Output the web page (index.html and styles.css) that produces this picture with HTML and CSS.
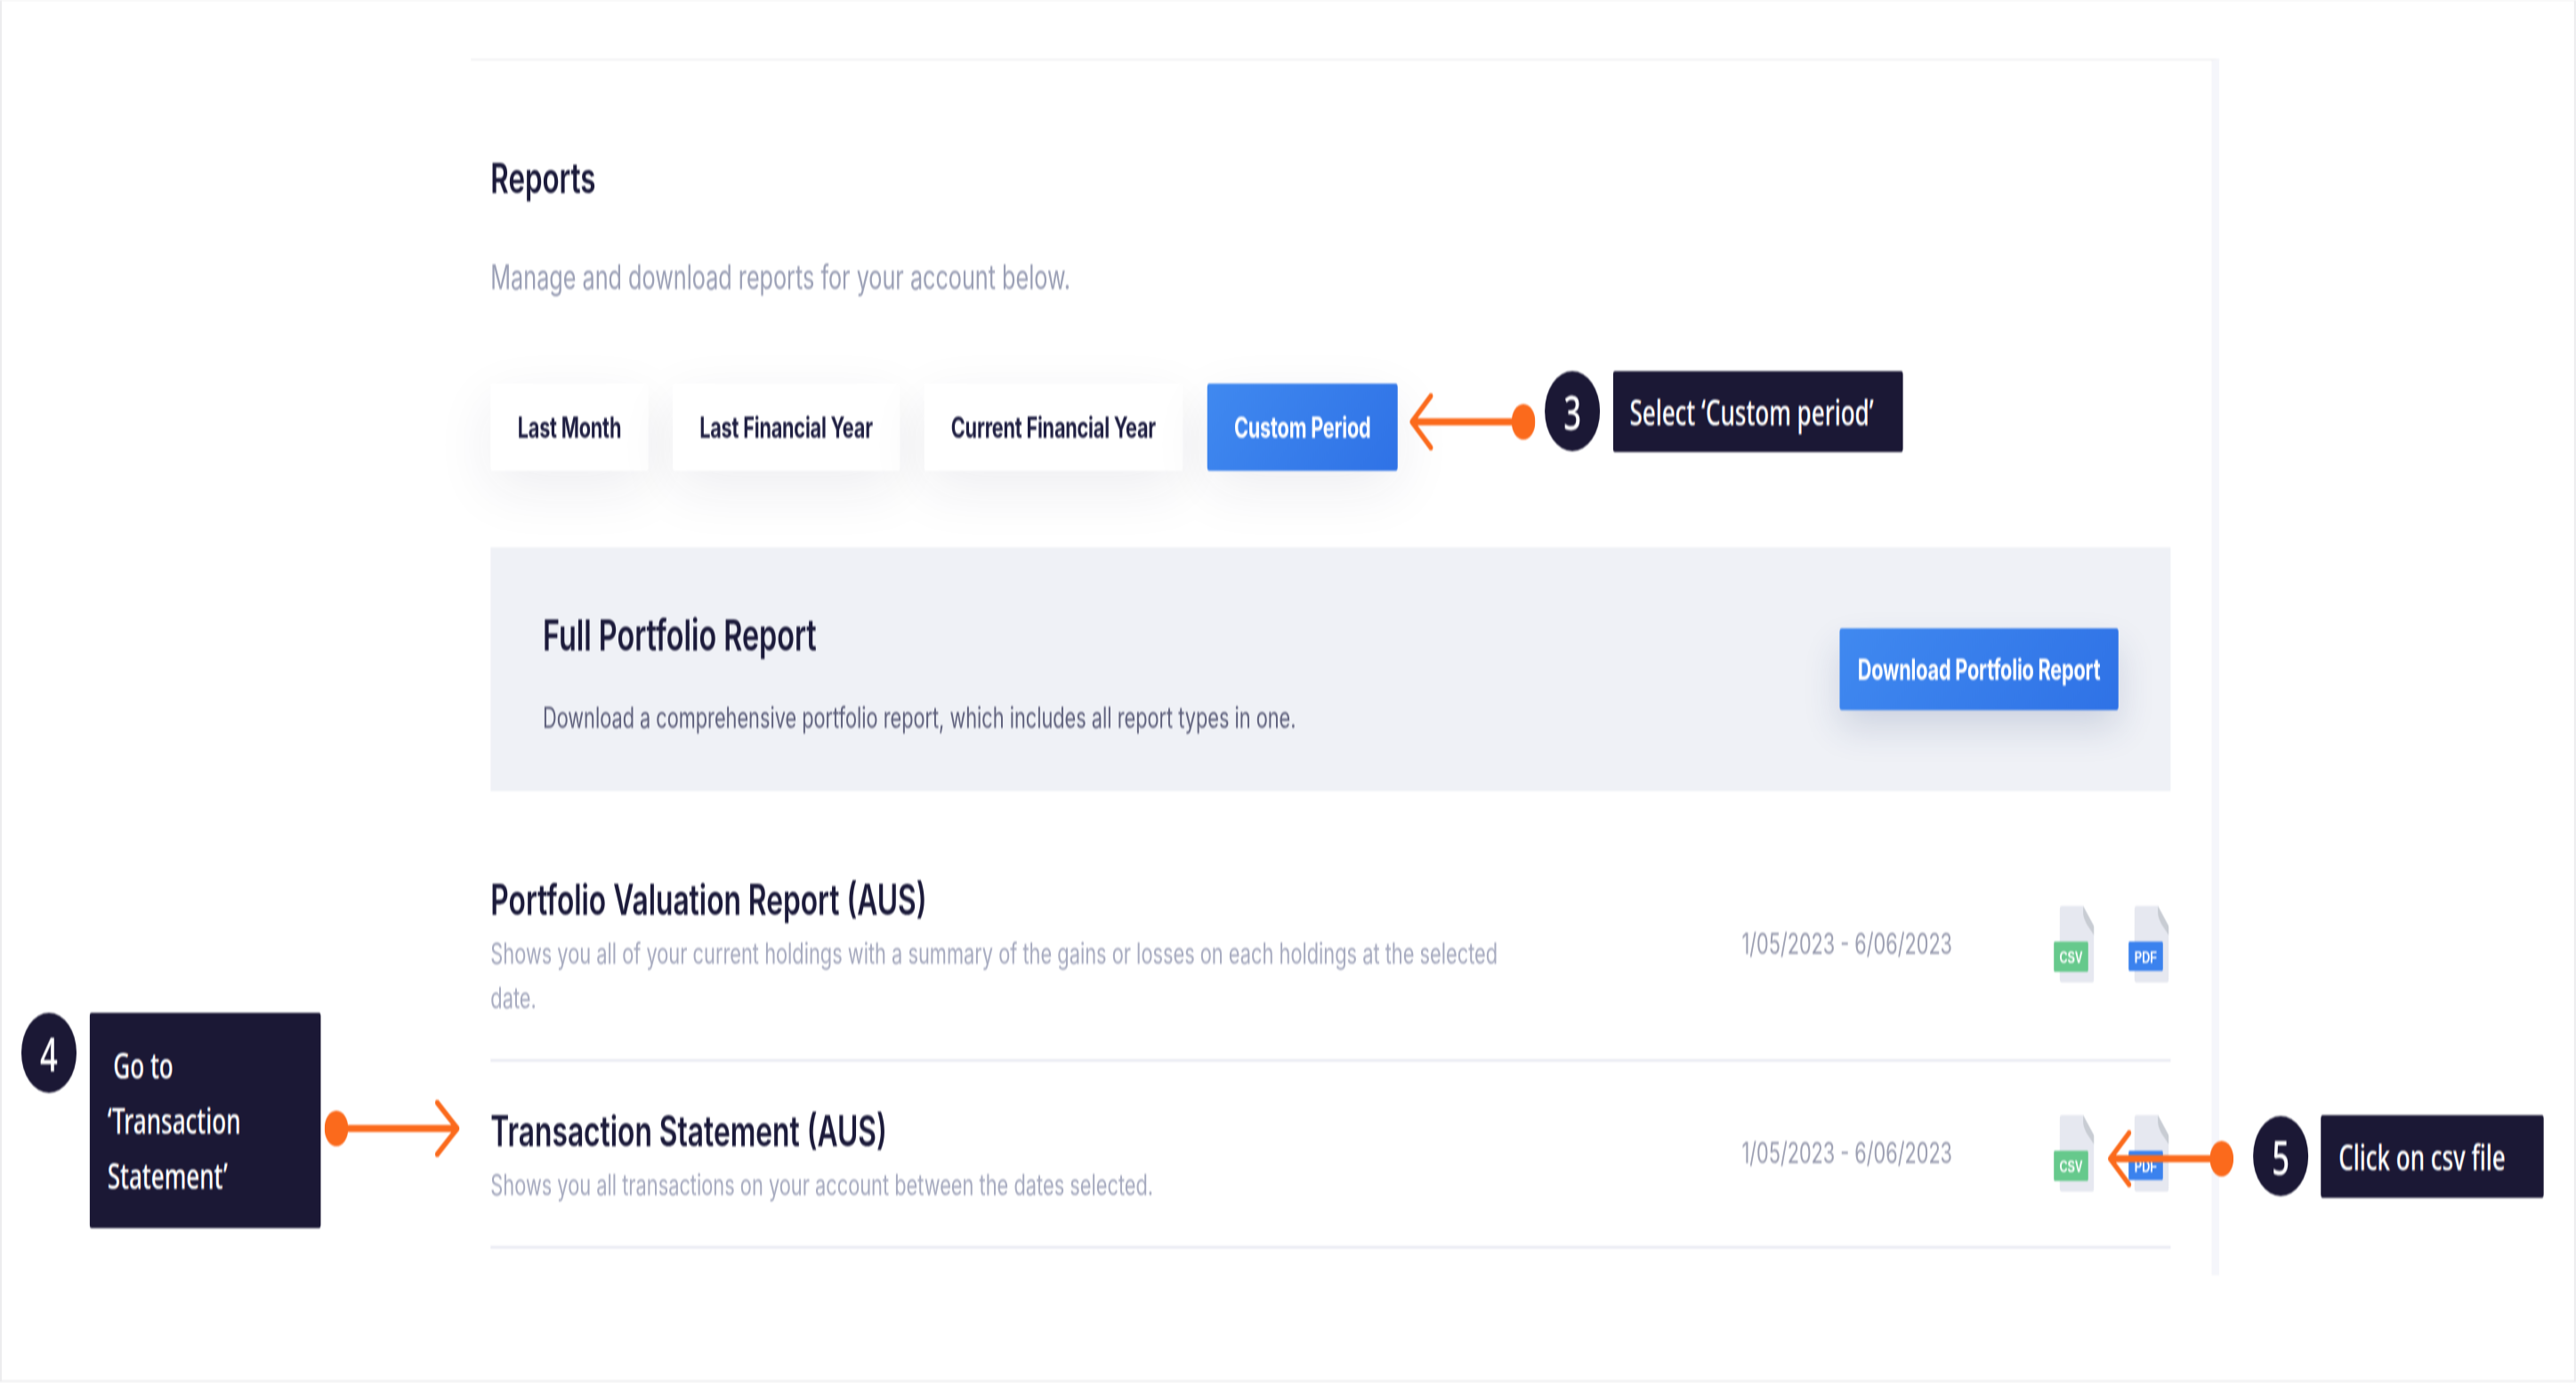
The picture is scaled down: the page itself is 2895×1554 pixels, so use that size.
FILE: index.html
```html
<!DOCTYPE html>
<html lang="en">
<head>
  <meta charset="UTF-8">
  <meta name="viewport" content="width=device-width, initial-scale=1">
  <title>Reports</title>
  <link rel="stylesheet" href="styles.css">
</head>
<body>
  <svg class="defs" width="0" height="0" aria-hidden="true">
    <defs>
      <g id="file-page">
        <path d="M14 0H49.5L68 23V82Q68 86 64 86H14Q10 86 10 82V4Q10 0 14 0Z" fill="#e6e8f0"/>
        <path d="M49.5 0L68 23V33L56 21Q49.5 13 49.5 8Z" fill="#c8ccd3"/>
      </g>
    </defs>
  </svg>

  <div class="frame">
  <div class="stage">
    <main class="panel">
      <h1 class="title">Reports</h1>
      <p class="subtitle">Manage and download reports for your account below.</p>

      <div class="periods">
        <button class="period">Last Month</button>
        <button class="period">Last Financial Year</button>
        <button class="period">Current Financial Year</button>
        <button class="period period-active">Custom Period</button>
      </div>

      <section class="full-report">
        <div class="full-text">
          <h2 class="full-title">Full Portfolio Report</h2>
          <p class="full-desc">Download a comprehensive portfolio report, which includes all report types in one.</p>
        </div>
        <button class="download">Download Portfolio Report</button>
      </section>

      <div class="rows">
        <div class="row">
          <div class="row-text">
            <h3 class="row-title">Portfolio Valuation Report (AUS)</h3>
            <p class="row-desc">Shows you all of your current holdings with a summary of the gains or losses on each holdings at the selected date.</p>
          </div>
          <div class="row-date">1/05/2023 - 6/06/2023</div>
          <div class="row-files">
            <svg class="file" viewBox="0 0 68 86"><use href="#file-page"/><rect y="40" width="58" height="34" rx="2" fill="#66c98c"/><text x="29" y="64" class="file-label">CSV</text></svg>
            <svg class="file" viewBox="0 0 68 86"><use href="#file-page"/><rect y="40" width="58" height="33" rx="2" fill="#3b82ee"/><text x="29" y="64" class="file-label">PDF</text></svg>
          </div>
        </div>
        <div class="row">
          <div class="row-text">
            <h3 class="row-title">Transaction Statement (AUS)</h3>
            <p class="row-desc">Shows you all transactions on your account between the dates selected.</p>
          </div>
          <div class="row-date">1/05/2023 - 6/06/2023</div>
          <div class="row-files">
            <svg class="file" viewBox="0 0 68 86"><use href="#file-page"/><rect y="40" width="58" height="34" rx="2" fill="#66c98c"/><text x="29" y="64" class="file-label">CSV</text></svg>
            <svg class="file" viewBox="0 0 68 86"><use href="#file-page"/><rect y="40" width="58" height="33" rx="2" fill="#3b82ee"/><text x="29" y="64" class="file-label">PDF</text></svg>
          </div>
        </div>
      </div>
    </main>

    <!-- Annotazioni sopra lo screenshot -->
    <svg class="arrow arrow-3" viewBox="0 0 212 64"><circle cx="192" cy="32" r="20"/><path d="M4 32H180" class="shaft"/><path d="M36 3L4 32L36 61" class="head"/></svg>
    <div class="step step-3">3</div>
    <div class="note note-3">Select ‘Custom period’</div>

    <div class="step step-4">4</div>
    <div class="note note-4"><span class="indent">Go to</span><br>‘Transaction<br>Statement’</div>
    <svg class="arrow arrow-4" viewBox="0 0 228 64"><circle cx="20" cy="32" r="20"/><path d="M32 32H222" class="shaft"/><path d="M190 3L224 32L190 61" class="head"/></svg>

    <svg class="arrow arrow-5" viewBox="0 0 212 64"><circle cx="192" cy="32" r="20"/><path d="M4 32H180" class="shaft"/><path d="M36 3L4 32L36 61" class="head"/></svg>
    <div class="step step-5">5</div>
    <div class="note note-5">Click on csv file</div>
  </div>
  </div>
</body>
</html>
```

FILE: styles.css
```css
html, body {
  margin: 0;
  height: 100%;
  overflow: hidden;
  background: #fff;
}
.defs {
  position: absolute;
}
.frame {
  width: 2895px;
  height: 1554px;
  overflow: hidden;
}
/* The shot is squeezed in width: everything is laid out 1.5x wide, then scaled */
.stage {
  position: relative;
  box-sizing: border-box;
  width: 4342px;
  height: 1553px;
  padding: 65px 0 0 791px;
  border: 2px solid #ececee;
  border-width: 1px 3px 2px 3px;
  font-family: Inter, "Liberation Sans", sans-serif;
  color: #1b1a3a;
  transform: scaleX(.6667);
  transform-origin: 0 0;
  filter: blur(1px);
}
.panel {
  box-sizing: border-box;
  width: 2947px;
  height: 1367px;
  padding: 102px 69px 0 33px;
  border-top: 2px solid #f0f0f2;
  border-right: 13px solid #f5f6fb;
}
.title {
  margin: 0;
  font-size: 47px;
  font-weight: 600;
  line-height: 60px;
}
.subtitle {
  margin: 56px 0 0;
  font-size: 37.8px;
  line-height: 50px;
  color: #9a9fb5;
}
.periods {
  display: flex;
  gap: 41px;
  margin-top: 95px;
}
.period {
  height: 98px;
  padding: 0 45.5px;
  border: 0;
  border-radius: 4px;
  background: #fff;
  font: 700 32.5px Inter, "Liberation Sans", sans-serif;
  letter-spacing: -.3px;
  color: #1f1f42;
  box-shadow: 0 20px 80px rgba(40, 40, 80, .08);
}
.period-active {
  color: #fff;
  background: linear-gradient(135deg, #4089f0, #2f72e6);
}
.full-report {
  display: flex;
  justify-content: space-between;
  align-items: center;
  box-sizing: border-box;
  height: 274px;
  margin-top: 86px;
  padding: 0 88px;
  background: #eff1f6;
}
.full-text {
  align-self: flex-start;
  padding-top: 69px;
}
.full-title {
  margin: 0;
  font-size: 48.5px;
  font-weight: 600;
  line-height: 60px;
}
.full-desc {
  margin: 37px 0 0;
  font-size: 32.6px;
  line-height: 50px;
  color: #5d5f7b;
}
.download {
  width: 470px;
  height: 92px;
  border: 0;
  border-radius: 4px;
  background: linear-gradient(135deg, #4089f0, #2f72e6);
  font: 700 32.5px Inter, "Liberation Sans", sans-serif;
  letter-spacing: -.3px;
  color: #fff;
  box-shadow: 0 20px 50px rgba(40, 60, 120, .16);
}
.rows {
  margin-top: 44px;
}
.row {
  display: flex;
  align-items: center;
  padding: 48px 3px 44px 0;
  border-bottom: 3px solid #e9eaf2;
}
.row-text {
  flex: 1;
}
.row-title {
  margin: 0;
  font-size: 47.6px;
  font-weight: 600;
  line-height: 60px;
}
.row-desc {
  max-width: 1740px;
  margin: 5px 0 0;
  font-size: 32.7px;
  line-height: 50px;
  color: #a5a9be;
}
.row-date {
  width: 526px;
  margin-bottom: 6px;
  font-size: 32.5px;
  color: #9a9db0;
  white-space: nowrap;
}
.row-files {
  display: flex;
  gap: 58px;
  margin-bottom: 5px;
}
.file {
  display: block;
  width: 68px;
  height: 86px;
}
.file-label {
  font: 700 19px "Liberation Sans", sans-serif;
  fill: #fff;
  text-anchor: middle;
}
/* Callouts */
.step {
  position: absolute;
  display: flex;
  align-items: center;
  justify-content: center;
  width: 93px;
  height: 90px;
  border-radius: 50%;
  background: #1b1835;
  font: 500 52px "Noto Sans", sans-serif;
  color: #fff;
}
.note {
  position: absolute;
  box-sizing: border-box;
  border-radius: 4px;
  background: #1b1835;
  font: 500 39px "Noto Sans", sans-serif;
  color: #fff;
  white-space: nowrap;
}
.step-3 { left: 2601px; top: 416px; }
.note-3 { left: 2716px; top: 416px; width: 489px; height: 91px; padding-left: 28px; line-height: 91px; }
.step-4 { left: 33px; top: 1137px; }
.note-4 { left: 148px; top: 1137px; width: 390px; height: 242px; padding: 28px 0 0 30px; line-height: 62px; }
.indent { padding-left: 10px; }
.step-5 { left: 3795px; top: 1253px; }
.note-5 { left: 3909px; top: 1252px; width: 376px; height: 93px; padding-left: 30px; line-height: 93px; }
.arrow {
  position: absolute;
  height: 64px;
}
.arrow circle { fill: #fb6a1c; }
.shaft { fill: none; stroke: #fb6a1c; stroke-width: 8; }
.head { fill: none; stroke: #fb6a1c; stroke-width: 7; stroke-linecap: round; stroke-linejoin: round; }
.arrow-3 { left: 2373px; top: 441px; width: 212px; }
.arrow-4 { left: 544px; top: 1235px; width: 228px; }
.arrow-5 { left: 3550px; top: 1269px; width: 212px; }
```
